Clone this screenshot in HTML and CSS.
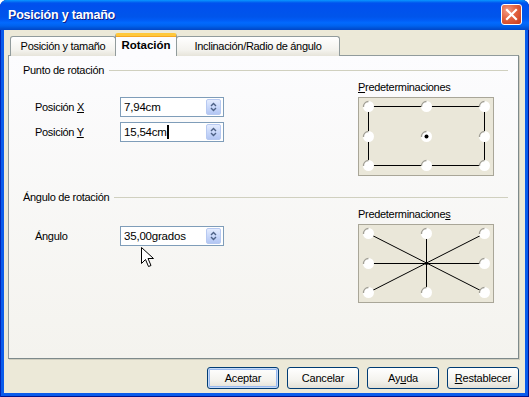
FILE: index.html
```html
<!DOCTYPE html>
<html lang="es">
<head>
    <meta charset="UTF-8">
    <title>Posición y tamaño</title>
    <link rel="stylesheet" href="styles.css">
</head>
<body>
    <div class="window">
        <div class="titlebar">
            <span class="title">Posición y tamaño</span>
            <span class="close">
                <svg width="21" height="21" viewBox="0 0 21 21">
                    <path d="M6 6 L15 15 M15 6 L6 15" stroke="#fff" stroke-width="2.2" stroke-linecap="square"/>
                </svg>
            </span>
        </div>
        <div class="client">
            <div class="tabs">
                <div class="tab tab-pos">Posición y tamaño</div>
                <div class="tab tab-rot active">Rotación</div>
                <div class="tab tab-incl">Inclinación/Radio de ángulo</div>
            </div>
            <div class="panel">
                <!-- Punto de rotación -->
                <div class="legend"><span>Punto de rotación</span><i class="rule"></i></div>
                <div class="group-body">
                    <div class="fields">
                        <div class="field">
                            <label>Posición <u>X</u></label>
                            <div class="spin">
                                <span class="value">7,94cm</span>
                                <span class="spin-btn"><svg width="13" height="14" viewBox="0 0 13 14"><path d="M4 6 L6.5 3.5 L9 6 M4 8 L6.5 10.5 L9 8" fill="none" stroke="#4D6185" stroke-width="1.4"/></svg></span>
                            </div>
                        </div>
                        <div class="field">
                            <label>Posición <u>Y</u></label>
                            <div class="spin">
                                <span class="value">15,54cm<i class="caret"></i></span>
                                <span class="spin-btn"><svg width="13" height="14" viewBox="0 0 13 14"><path d="M4 6 L6.5 3.5 L9 6 M4 8 L6.5 10.5 L9 8" fill="none" stroke="#4D6185" stroke-width="1.4"/></svg></span>
                            </div>
                        </div>
                    </div>
                    <div class="presets">
                        <div class="presets-label"><u>P</u>redeterminaciones</div>
                        <div class="preset-box">
                            <svg width="134" height="77" viewBox="1 1 134 77">
                                <rect x="10.5" y="9.5" width="116" height="59" fill="none" stroke="#000"/>
                                <g class="radios">
                                    <circle cx="10.5" cy="9.5" r="5.5"/><circle cx="68.5" cy="9.5" r="5.5"/><circle cx="126.5" cy="9.5" r="5.5"/>
                                    <circle cx="10.5" cy="39.5" r="5.5"/><circle cx="68.5" cy="39.5" r="5.5"/><circle cx="126.5" cy="39.5" r="5.5"/>
                                    <circle cx="10.5" cy="68.5" r="5.5"/><circle cx="68.5" cy="68.5" r="5.5"/><circle cx="126.5" cy="68.5" r="5.5"/>
                                </g>
                                <g class="shades">
                                    <path d="M5.5 10 A5 5 0 0 1 10.5 4.5"/><path d="M63.5 10 A5 5 0 0 1 68.5 4.5"/><path d="M121.5 10 A5 5 0 0 1 126.5 4.5"/>
                                    <path d="M5.5 40 A5 5 0 0 1 10.5 34.5"/><path d="M63.5 40 A5 5 0 0 1 68.5 34.5"/><path d="M121.5 40 A5 5 0 0 1 126.5 34.5"/>
                                    <path d="M5.5 69 A5 5 0 0 1 10.5 63.5"/><path d="M63.5 69 A5 5 0 0 1 68.5 63.5"/><path d="M121.5 69 A5 5 0 0 1 126.5 63.5"/>
                                </g>
                                <circle cx="68.5" cy="39.5" r="2" fill="#000"/>
                            </svg>
                        </div>
                    </div>
                </div>

                <!-- Ángulo de rotación -->
                <div class="legend legend-angle"><span>Ángulo de rotación</span><i class="rule"></i></div>
                <div class="group-body">
                    <div class="fields fields-angle">
                        <div class="field">
                            <label>Ángulo</label>
                            <div class="spin">
                                <span class="value">35,00grados</span>
                                <span class="spin-btn"><svg width="13" height="14" viewBox="0 0 13 14"><path d="M4 6 L6.5 3.5 L9 6 M4 8 L6.5 10.5 L9 8" fill="none" stroke="#4D6185" stroke-width="1.4"/></svg></span>
                            </div>
                        </div>
                    </div>
                    <div class="presets">
                        <div class="presets-label">Predeterminacione<u>s</u></div>
                        <div class="preset-box">
                            <svg width="134" height="77" viewBox="1 1 134 77">
                                <path d="M10.5 9.5 L126.5 68.5 M126.5 9.5 L10.5 68.5 M68.5 9.5 L68.5 68.5 M10.5 39.5 L126.5 39.5" stroke="#000" fill="none"/>
                                <g class="radios">
                                    <circle cx="10.5" cy="9.5" r="5.5"/><circle cx="68.5" cy="9.5" r="5.5"/><circle cx="126.5" cy="9.5" r="5.5"/>
                                    <circle cx="10.5" cy="39.5" r="5.5"/><circle cx="126.5" cy="39.5" r="5.5"/>
                                    <circle cx="10.5" cy="68.5" r="5.5"/><circle cx="68.5" cy="68.5" r="5.5"/><circle cx="126.5" cy="68.5" r="5.5"/>
                                </g>
                                <g class="shades">
                                    <path d="M5.5 10 A5 5 0 0 1 10.5 4.5"/><path d="M63.5 10 A5 5 0 0 1 68.5 4.5"/><path d="M121.5 10 A5 5 0 0 1 126.5 4.5"/>
                                    <path d="M5.5 40 A5 5 0 0 1 10.5 34.5"/><path d="M121.5 40 A5 5 0 0 1 126.5 34.5"/>
                                    <path d="M5.5 69 A5 5 0 0 1 10.5 63.5"/><path d="M63.5 69 A5 5 0 0 1 68.5 63.5"/><path d="M121.5 69 A5 5 0 0 1 126.5 63.5"/>
                                </g>
                                <circle cx="68.5" cy="39.5" r="1.5" fill="#000"/>
                            </svg>
                        </div>
                    </div>
                </div>
            </div>
            <div class="buttons">
                <button class="btn default">Aceptar</button>
                <button class="btn">Cancelar</button>
                <button class="btn">Ay<u>u</u>da</button>
                <button class="btn"><u>R</u>establecer</button>
            </div>
        </div>

        <!-- mouse pointer -->
        <svg class="pointer" width="13" height="21" viewBox="0 0 13 21">
            <path d="M0.5 0.5 L0.5 16.5 L4.5 12.5 L7.5 19.5 L10 18.5 L7 11.5 L12.5 11.5 Z" fill="#fff" stroke="#000" stroke-linejoin="miter"/>
        </svg>
    </div>
</body>
</html>
```

FILE: styles.css
```css
* {
    box-sizing: border-box;
}
body {
    margin: 0;
    font-family: "Liberation Sans", Arial, sans-serif;
    font-size: 11px;
    letter-spacing: -0.3px;
    color: #000;
    background: #fff;
}
.window {
    position: relative;
    width: 529px;
    height: 397px;
    display: flex;
    flex-direction: column;
    padding: 0 4px 4px 4px;
    background: #0A5CEB;
    box-shadow: inset 1px 0 #0026B8, inset -1px 0 #00138C, inset 0 -1px #00138C;
    border-radius: 7px 7px 0 0;
    overflow: hidden;
}
.titlebar {
    height: 30px;
    flex: none;
    margin: 0 -4px;
    display: flex;
    align-items: center;
    justify-content: space-between;
    padding: 0 7px 1px 8px;
    color: #fff;
    background: linear-gradient(#0997FF 0%, #0053EE 10%, #0050EE 18%, #0055EB 56%, #005BF5 66%, #026AFE 76%, #0062EF 86%, #0052D6 94%, #0046C8 100%);
}
.title {
    font-weight: bold;
    font-size: 12.5px;
    letter-spacing: -0.2px;
    text-shadow: 1px 1px #0A1E8A;
}
.close {
    width: 21px;
    height: 21px;
    border: 1px solid #fff;
    border-radius: 3px;
    background: radial-gradient(circle at 30% 30%, #F39B85 0%, #E2623F 45%, #C9391A 100%);
    display: flex;
    align-items: center;
    justify-content: center;
}
.close svg {
    margin: -1px;
}
.client {
    flex: 1;
    display: flex;
    flex-direction: column;
    padding: 3px 6px 4px 4px;
    background: #ECE9D8;
}
.tabs {
    display: flex;
    align-items: flex-end;
    height: 23px;
    margin-bottom: -1px;
    padding-left: 2px;
    position: relative;
    z-index: 1;
}
.tab {
    height: 20px;
    display: flex;
    align-items: center;
    justify-content: center;
    border: 1px solid #919B9C;
    border-bottom: none;
    border-radius: 3px 3px 0 0;
    background: linear-gradient(#FFFFFF, #F3F2ED 70%, #E6E4DA);
    white-space: nowrap;
    padding-bottom: 1px;
}
.tab-pos {
    width: 106px;
}
.tab-rot {
    width: 62px;
}
.tab-incl {
    width: 164px;
}
.tab.active {
    height: 23px;
    margin: 0 -1px;
    border-top: 3px solid #FFC83C;
    box-shadow: inset 0 1px #F5A623;
    background: #FCFCFE;
    font-weight: bold;
    font-size: 11.5px;
    letter-spacing: 0;
    position: relative;
    z-index: 2;
    padding-bottom: 2px;
}
.panel {
    flex: 1;
    border: 1px solid #919B9C;
    border-right-color: #7E8A8B;
    border-bottom-color: #7E8A8B;
    box-shadow: 1px 1px #D0CEBF;
    background: linear-gradient(#FCFCFE, #F4F3EE);
    padding: 8px 10px 0 14px;
}
.legend {
    display: flex;
    align-items: center;
    gap: 5px;
    line-height: 13px;
}
.legend-angle {
    margin-top: 15px;
}
.rule {
    flex: 1;
    height: 1px;
    background: #D0D0BF;
}
.group-body {
    display: flex;
    margin-top: 4px;
    padding-left: 12px;
}
.fields {
    width: 323px;
    flex: none;
    display: flex;
    flex-direction: column;
    gap: 5px;
    padding-top: 16px;
}
.fields-angle {
    padding-top: 18px;
}
.field {
    display: flex;
    align-items: center;
}
.field label {
    width: 85px;
}
.spin {
    width: 104px;
    height: 20px;
    border: 1px solid #7F9DB9;
    background: #fff;
    display: flex;
    align-items: center;
    justify-content: space-between;
    padding: 0 2px 0 3px;
}
.value {
    display: flex;
    align-items: center;
    font-size: 11.5px;
    letter-spacing: -0.2px;
}
.caret {
    width: 2px;
    height: 14px;
    background: #000;
}
.spin-btn {
    width: 15px;
    height: 16px;
    border: 1px solid #B7C9F1;
    border-radius: 2px;
    background: linear-gradient(#E4ECFE, #C9D8FA 50%, #B3C6F3);
}
.spin-btn svg {
    display: block;
    margin: 0;
}
.presets {
    width: 136px;
}
.presets-label {
    line-height: 13px;
    margin-bottom: 3px;
}
.preset-box {
    width: 136px;
    height: 79px;
    border: 1px solid #A9A698;
    background: #EAE7D9;
}
.preset-box svg {
    display: block;
}
.radios circle {
    fill: #fff;
}
.shades path {
    fill: none;
    stroke: #A3A196;
    stroke-width: 1.3;
}
.buttons {
    display: flex;
    justify-content: flex-end;
    gap: 8px;
    margin-top: 8px;
}
.btn {
    width: 72px;
    height: 22px;
    font-family: inherit;
    font-size: 11px;
    letter-spacing: -0.2px;
    color: #000;
    border: 1px solid #003C74;
    border-radius: 3px;
    background: linear-gradient(#FFFFFF, #F4F3EE 60%, #E3E0D6);
    padding: 0;
}
.btn.default {
    box-shadow: inset 0 0 0 1px #C4D9F8, inset 0 0 0 2px #97B8EE;
}
.pointer {
    position: absolute;
    left: 141px;
    top: 247px;
}
```
